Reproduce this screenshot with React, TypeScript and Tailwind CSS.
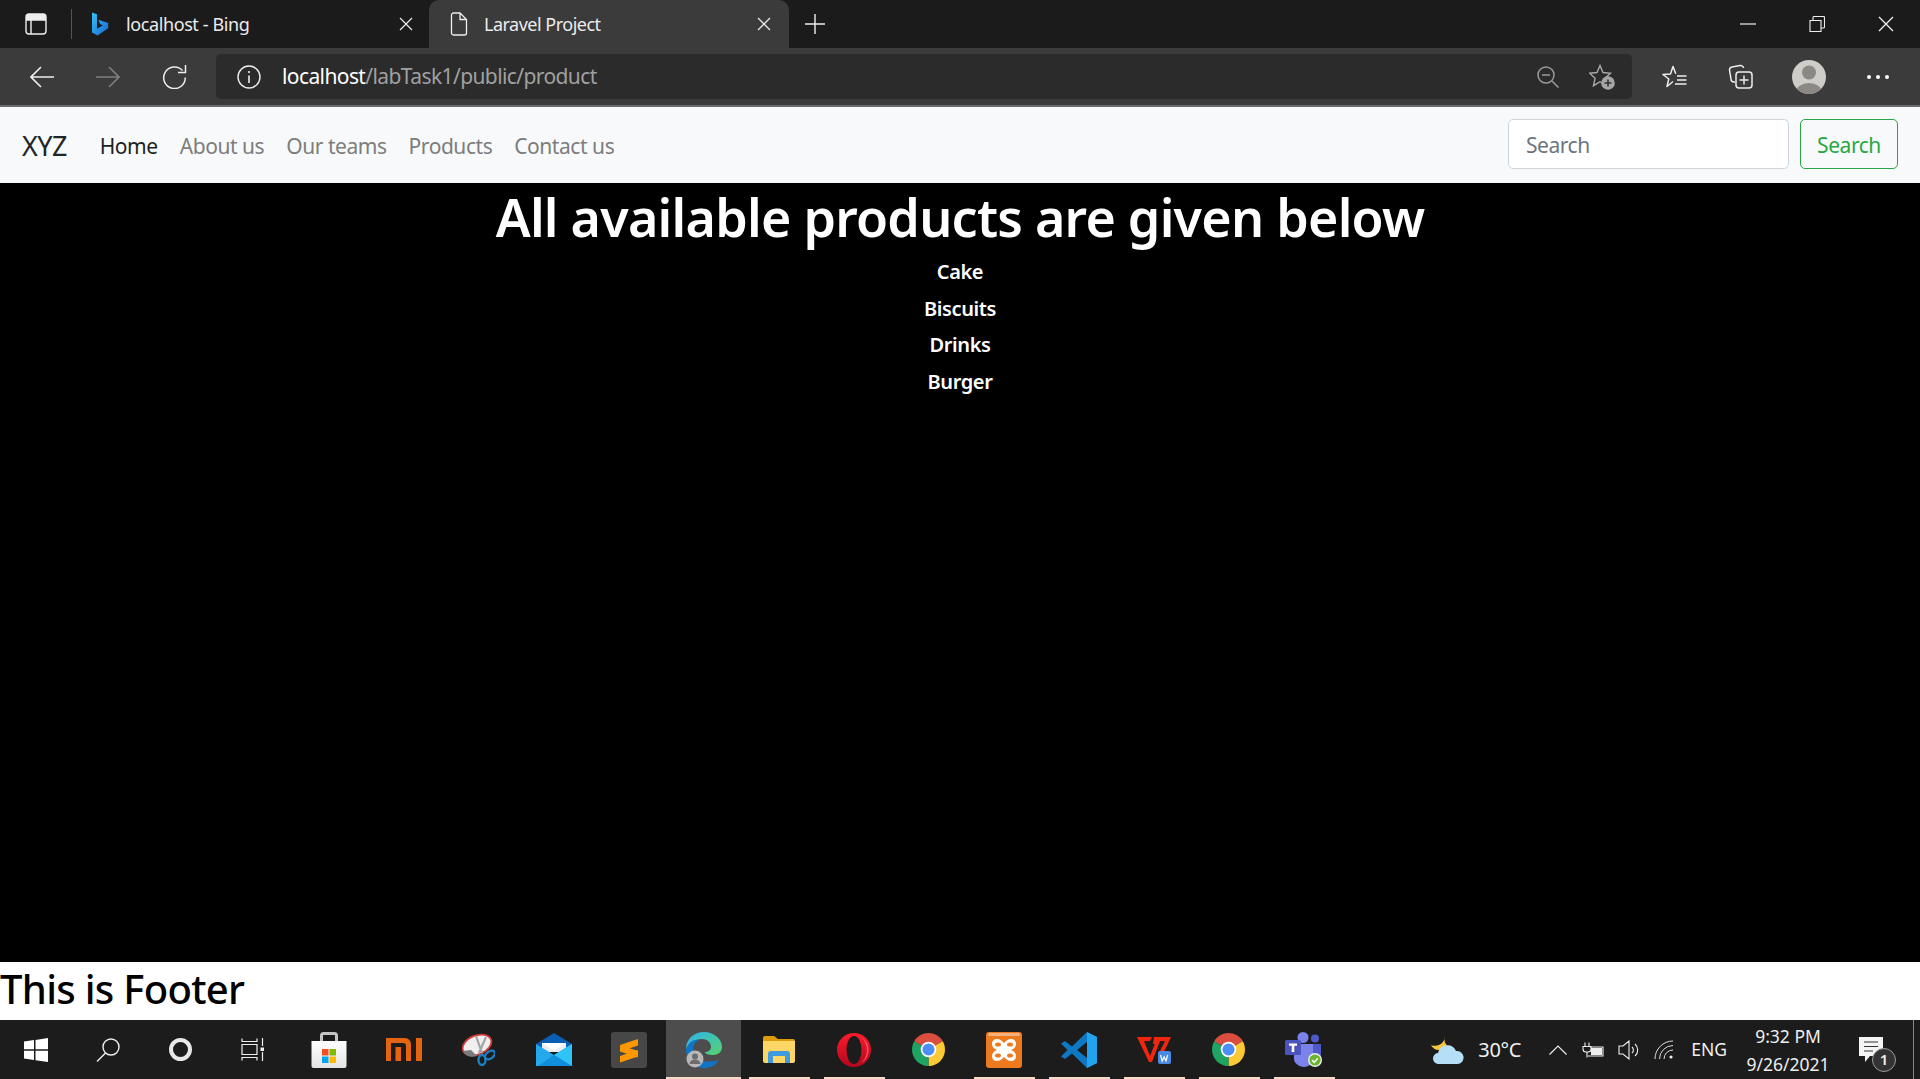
import React from "react";

const S = ({ w, h, vb, children, className = "" }: { w: number; h: number; vb?: string; children: React.ReactNode; className?: string }) => (
  <svg width={w} height={h} viewBox={vb ?? `0 0 ${w} ${h}`} fill="none" className={`block shrink-0 ${className}`}>{children}</svg>
);

const Bing = () => (
  <S w={18} h={24}>
    <defs><linearGradient id="bg" x1="0" y1="0" x2="1" y2="1"><stop offset="0" stopColor="#35c1f1" /><stop offset="1" stopColor="#1b66d6" /></linearGradient></defs>
    <path d="M1 0.500l5 1.700v14.500l6-3.400-3-1.400-1.600-4.200 9.800 3.300v5.200L6.500 23.500 1 20.500z" fill="url(#bg)" />
  </S>
);
const X = ({ s = 14, c = "#e8e8e8" }: { s?: number; c?: string }) => (
  <S w={s} h={s}><path d={`M1 1L${s - 1} ${s - 1}M${s - 1} 1L1 ${s - 1}`} stroke={c} strokeWidth="1.3" /></S>
);
const Doc = () => (
  <S w={18} h={24}><path d="M1.500 3a2 2 0 012-2h6.500l6.500 6.500V21a2 2 0 01-2 2h-11a2 2 0 01-2-2z M10 1v6.500h6.500" stroke="#eee" strokeWidth="1.3" /></S>
);
const Arrow = ({ c, flip }: { c: string; flip?: boolean }) => (
  <S w={24} h={22} className={flip ? "-scale-x-100" : ""}><path d="M1 11h23M11 1L1 11l10 10" stroke={c} strokeWidth="1.6" /></S>
);

const Win = () => (
  <S w={24} h={24}><path d="M0 3.500l10-1.400v9.200H0zM11.500 1.900L24 0v11.300H11.500zM0 12.800h10v9.200L0 20.600zM11.500 12.800H24V24l-12.500-1.800z" fill="#fff" /></S>
);

const Store = () => (
  <S w={36} h={36}>
    <defs><linearGradient id="st" x1="0" y1="0" x2="0" y2="1"><stop offset="0" stopColor="#ffffff" /><stop offset="1" stopColor="#e4e4e4" /></linearGradient></defs>
    <path d="M10.500 10V3.500A2 2 0 0112.500 1.500h11a2 2 0 012 2V10" stroke="#c4c4c4" strokeWidth="3" />
    <path d="M0.500 9h35v25a2 2 0 01-2 2h-31a2 2 0 01-2-2z" fill="url(#st)" />
    <rect x="11" y="17" width="6.500" height="6.500" fill="#f25022" /><rect x="18.500" y="17" width="6.500" height="6.500" fill="#7fba00" />
    <rect x="11" y="24.500" width="6.500" height="6.500" fill="#00a4ef" /><rect x="18.500" y="24.500" width="6.500" height="6.500" fill="#ffb900" />
  </S>
);
const Mi = () => (
  <S w={36} h={23}><path d="M0 0h19a6 6 0 016 6v17h-5V8a3 3 0 00-3-3H5v18H0zM9.500 9H15v14H9.500zM30 0h6v23h-6z" fill="#e5640f" /></S>
);
const Snip = () => (
  <S w={33} h={33}>
    <ellipse cx="15" cy="12" rx="15" ry="9.500" transform="rotate(-22 15 12)" fill="#efefef" stroke="#d33a3a" strokeWidth="1.8" />
    <path d="M1 18c2 5 8 7 14 5l-6-6z" fill="#7a7a7a" />
    <path d="M14 3l6 17M24 4L17 20" stroke="#a5a5a5" strokeWidth="2.2" />
    <ellipse cx="20" cy="27" rx="3.500" ry="5" stroke="#1c81c4" strokeWidth="2.400" />
    <ellipse cx="28" cy="22" rx="3.500" ry="5.500" transform="rotate(55 28 22)" stroke="#1c81c4" strokeWidth="2.400" />
  </S>
);
const Mail = () => (
  <S w={36} h={33}>
    <path d="M0 11L18 0l18 11v6H0z" fill="#0a5fb4" />
    <path d="M6 10h24v9H6z" fill="#ececec" />
    <path d="M6 10h24l-12 8z" fill="#ffffff" />
    <path d="M0 11l18 11 18-11v22H0z" fill="#25a9ec" />
    <path d="M36 11v22L18 22z" fill="#2fc4f7" />
    <path d="M36 33H2l16-11z" fill="#118fdd" />
  </S>
);
const Sublime = () => (
  <S w={36} h={36}>
    <rect width="36" height="36" rx="3" fill="#474747" />
    <path d="M9 13L27 7v6.500L9 19.500zM9 13l18 6v6.500L9 19.500zM9 24l18-6v6.500L9 30.500z" fill="#ff9800" />
  </S>
);
const Edge = () => (
  <S w={36} h={36}>
    <defs>
      <linearGradient id="eg" x1="0" y1="0" x2="1" y2="1"><stop offset="0" stopColor="#2db4ee" /><stop offset="1" stopColor="#58d36a" /></linearGradient>
    </defs>
    <path d="M0 17C0 7 8 0 18 0s18 7 18 15c0 5-4 8-9 8-4 0-8-1-8-3 3 0 6-2 6-5 0-5-4-8-9-8S3 10 0 17z" fill="url(#eg)" />
    <path d="M0 17c3-7 8-10 13-9-5 2-7 7-5 13 2 7 12 11 25 7-4 6-9 8-15 8C7 36 0 28 0 17z" fill="#1174c6" />
    <circle cx="9" cy="27" r="8.500" fill="#b8b8b8" />
    <circle cx="9" cy="24.500" r="3" fill="#6c6c6c" /><path d="M3.500 32a5.500 4.500 0 0111 0z" fill="#6c6c6c" />
  </S>
);
const Folder = () => (
  <S w={32} h={27}>
    <path d="M0 2a2 2 0 012-2h9l4 3h15a2 2 0 012 2v4H0z" fill="#dc9d0c" />
    <path d="M0 5h32v20a2 2 0 01-2 2H2a2 2 0 01-2-2z" fill="#fcd765" />
    <path d="M5 27v-9a3 3 0 013-3h16a3 3 0 013 3v9h-5v-7H10v7z" fill="#3f9ade" />
  </S>
);
const Opera = () => (
  <S w={34} h={34}>
    <defs><linearGradient id="op" x1="0" y1="0" x2="0" y2="1"><stop offset="0" stopColor="#ff1b2d" /><stop offset="1" stopColor="#b1071d" /></linearGradient></defs>
    <circle cx="17" cy="17" r="17" fill="url(#op)" />
    <ellipse cx="17" cy="17" rx="7.500" ry="14" fill="#1c1c1c" />
    <path d="M24 4a17 17 0 010 26 15 15 0 000-26z" fill="#ff5560" />
  </S>
);
const Chrome = () => (
  <S w={33} h={33} vb="0 0 34 34">
    <path d="M17 17L2.300 8.500A17 17 0 0131.700 8.500z" fill="#db4d3f" />
    <path d="M17 17l14.700-8.500A17 17 0 0117 34z" fill="#fcc934" />
    <path d="M17 17L17 34A17 17 0 012.300 8.500z" fill="#1ea362" />
    <circle cx="17" cy="17" r="8" fill="#fff" /><circle cx="17" cy="17" r="6.200" fill="#4c8df6" />
  </S>
);
const Xampp = () => (
  <S w={36} h={36}>
    <rect width="36" height="36" rx="3" fill="#ee7a1f" />
    <rect x="2" y="1" width="32" height="3" rx="1.500" fill="#f6b27c" />
    <path d="M11 7C8 7 6 9 6 12c0 3 2 5 5 6-3 1-5 3-5 6 0 3 2 5 5 5 3 0 5-2 7-4 2 2 4 4 7 4 3 0 5-2 5-5 0-3-2-5-5-6 3-1 5-3 5-6 0-3-2-5-5-5-3 0-5 2-7 4-2-2-4-4-7-4z" fill="#fff" />
    <ellipse cx="12" cy="12.500" rx="3" ry="2" fill="#ee7a1f" /><ellipse cx="24" cy="12.500" rx="3" ry="2" fill="#ee7a1f" />
    <ellipse cx="12" cy="23.500" rx="3" ry="2" fill="#ee7a1f" /><ellipse cx="24" cy="23.500" rx="3" ry="2" fill="#ee7a1f" />
  </S>
);
const VSCode = () => (
  <S w={36} h={36}>
    <path d="M26 0l10 5v26l-10 5-15-14.500-7 5.500-4-2.500L6.500 18 0 11.500 4 9l7 5.500z" fill="#0f78c2" />
    <path d="M26 0l10 5v26l-10 5z" fill="#22a3ee" />
    <path d="M26 10l-10 8 10 8z" fill="#1c1c1c" />
  </S>
);
const Wps = () => (
  <S w={34} h={28}>
    <path d="M0 1h15l-2 4H7l6 15 6-15h4l-8 21h-3zM17 1h17l-8 17-4-1 6-12h-7l-1 3h-4z" fill="#f0260d" />
    <rect x="21" y="15" width="13" height="13" rx="2" fill="#4a8ae4" />
    <path d="M23.500 19l1.700 6 2-4 1.800 4 1.700-6" stroke="#fff" strokeWidth="1.200" />
  </S>
);
const Teams = () => (
  <S w={37} h={35}>
    <circle cx="18" cy="5.500" r="5.500" fill="#7b83eb" /><circle cx="30" cy="6.500" r="4" fill="#5059c9" />
    <path d="M23 12h13v11c0 4-3 6-6 6h-7z" fill="#5059c9" />
    <path d="M9 12h19v15c0 4-4 8-9 8s-10-4-10-8z" fill="#7b83eb" />
    <rect x="0" y="8" width="16" height="15" rx="1.500" fill="#4b53bc" />
    <path d="M4 11.500h8v2.200H9.300V20H6.700v-6.300H4z" fill="#fff" />
    <circle cx="30" cy="28" r="7" fill="#eee" /><circle cx="30" cy="28" r="5.600" fill="#6bb52c" />
    <path d="M27 28l2.200 2.300 3.600-4" stroke="#fff" strokeWidth="1.500" />
  </S>
);

const taskItems: { icon: React.ReactNode; mark?: boolean; active?: boolean }[] = [
  { icon: <Store /> },
  { icon: <Mi /> },
  { icon: <Snip /> },
  { icon: <Mail /> },
  { icon: <Sublime /> },
  { icon: <Edge />, active: true },
  { icon: <Folder />, mark: true },
  { icon: <Opera />, mark: true },
  { icon: <Chrome /> },
  { icon: <Xampp />, mark: true },
  { icon: <VSCode />, mark: true },
  { icon: <Wps />, mark: true },
  { icon: <Chrome />, mark: true },
  { icon: <Teams />, mark: true },
];

const Slot = ({ w, children }: { w: string; children: React.ReactNode }) => (
  <div className={`flex shrink-0 items-center justify-center ${w}`}>{children}</div>
);

export default function App() {
  return (
    <div className="flex h-[1079px] w-[1920px] flex-col overflow-hidden bg-black font-['Noto_Sans',sans-serif]">
      {/* tab strip */}
      <div className="flex h-12 shrink-0 items-stretch bg-[#1b1b1b] text-[18px] text-[#ececec]">
        <div className="flex w-[71px] shrink-0 items-center justify-center">
          <S w={22} h={22}><rect x="1" y="1" width="20" height="20" rx="3" stroke="#eee" strokeWidth="1.400" /><path d="M1 7h20M6 7v14" stroke="#eee" strokeWidth="1.400" /><path d="M1 4a3 3 0 013-3h14a3 3 0 013 3v3H1z" fill="#eee" /></S>
        </div>
        <div className="my-[9px] w-px shrink-0 bg-[#555]" />
        <div className="flex w-[357px] shrink-0 items-center pl-[19px] pr-4">
          <Bing />
          <span className="ml-[17px] flex-1 tracking-[-0.4px]">localhost - Bing</span>
          <X />
        </div>
        <div className="flex w-[360px] shrink-0 items-center rounded-t-[10px] bg-[#3b3b3b] pl-[21px] pr-[18px]">
          <Doc />
          <span className="ml-[16px] flex-1 tracking-[-0.5px]">Laravel Project</span>
          <X />
        </div>
        <div className="flex w-[52px] shrink-0 items-center justify-center">
          <S w={20} h={20}><path d="M10 0v20M0 10h20" stroke="#eee" strokeWidth="1.400" /></S>
        </div>
        <div className="flex-1" />
        <Slot w="w-[69px]"><S w={16} h={2}><path d="M0 1h16" stroke="#eee" strokeWidth="1.200" /></S></Slot>
        <Slot w="w-[69px]"><S w={16} h={16}><path d="M1 4.500h11v11H1zM4 4.500V1.500a1 1 0 011-1h9.500a1 1 0 011 1V11a1 1 0 01-1 1H12" stroke="#eee" strokeWidth="1.100" /></S></Slot>
        <Slot w="w-[69px]"><X s={16} c="#f2f2f2" /></Slot>
      </div>

      {/* toolbar */}
      <div className="flex h-[59px] shrink-0 border-b-2 border-[#6a6a6a] bg-[#3b3b3b] pl-[9px] pr-[9px]">
        <Slot w="w-[66px]"><Arrow c="#eee" /></Slot>
        <Slot w="w-[66px]"><Arrow c="#7f7f7f" flip /></Slot>
        <Slot w="w-[66px]">
          <S w={25} h={25}><path d="M20.500 6.500A10.800 10.800 0 1023.300 13.500M23.500 1v7.500H16" stroke="#eee" strokeWidth="1.500" /></S>
        </Slot>
        <div className="mx-[9px] mt-[6px] flex h-[45px] flex-1 items-center rounded-[5px] bg-[#2b2b2b]">
          <div className="flex w-[66px] shrink-0 items-center justify-center">
            <S w={24} h={24}><circle cx="12" cy="12" r="11" stroke="#eee" strokeWidth="1.400" /><path d="M12 10.500V18M12 6v2" stroke="#eee" strokeWidth="1.600" /></S>
          </div>
          <div className="flex-1 text-[21px] tracking-[-0.6px] text-[#a0a0a0]"><span className="text-white">localhost</span>/labTask1/public/product</div>
          <div className="flex w-[54px] justify-center">
            <S w={22} h={22}><circle cx="9" cy="9" r="8" stroke="#9a9a9a" strokeWidth="1.500" /><path d="M5 9h8M15 15l6.500 6.500" stroke="#9a9a9a" strokeWidth="1.500" /></S>
          </div>
          <div className="flex w-[54px] justify-center">
            <S w={26} h={26}><path d="M11 1.500l3 7 7.500.7-5.500 5 1.500 7.500-6.500-4-6.500 4 1.600-7.500L.6 9.200l7.400-.7z" stroke="#a8a8a8" strokeWidth="1.400" /><circle cx="19" cy="19" r="6.800" fill="#a6a6a6" /><path d="M15.500 19h7M19 15.500v7" stroke="#333" strokeWidth="1.600" /></S>
          </div>
          <div className="w-[3px]" />
        </div>
        <Slot w="w-[66px]">
          <S w={25} h={24}><path d="M11 16.500l-6 5 1.800-7.500L1 9.500l7.500-.6L11 1.500l2.800 7.200" stroke="#eee" strokeWidth="1.500" strokeLinejoin="round" /><path d="M15 11h9.500M15 15h9.500M13 19h11.500" stroke="#eee" strokeWidth="1.500" /></S>
        </Slot>
        <Slot w="w-[66px]">
          <S w={25} h={25}><path d="M7 18H6a3 3 0 01-3-3L1.500 6a3 3 0 012.500-3l8-1.500a3 3 0 013.500 2.500" stroke="#eee" strokeWidth="1.500" /><rect x="8" y="8" width="16" height="16" rx="3" stroke="#eee" strokeWidth="1.500" /><path d="M16 11.500v9M11.500 16h9" stroke="#eee" strokeWidth="1.500" /></S>
        </Slot>
        <div className="ml-[3px]" />
        <Slot w="w-[66px]">
          <S w={34} h={34}><defs><clipPath id="av"><circle cx="17" cy="17" r="17" /></clipPath></defs><g clipPath="url(#av)"><rect width="34" height="34" fill="#cfcdc9" /><circle cx="17" cy="12.500" r="7" fill="#8c8883" /><ellipse cx="17" cy="32" rx="13" ry="9" fill="#8c8883" /></g></S>
        </Slot>
        <div className="ml-[3px]" />
        <Slot w="w-[66px]">
          <div className="flex gap-[5px]"><div className="size-[4px] rounded-full bg-white" /><div className="size-[4px] rounded-full bg-white" /><div className="size-[4px] rounded-full bg-white" /></div>
        </Slot>
      </div>

      {/* navbar */}
      <div className="flex h-[76px] shrink-0 items-center bg-[#f8f9fa] pb-[2px] pl-[22px] pr-[22px] text-[21px]">
        <span className="mt-[5px] text-[27px] tracking-[-0.6px] text-[#212529]">XYZ</span>
        <div className="ml-[33px] mt-[5px] flex gap-[22px] tracking-[-0.45px] text-[#7d7d7d]">
          <span className="text-[#1c1f22]">Home</span>
          <span>About us</span>
          <span>Our teams</span>
          <span>Products</span>
          <span>Contact us</span>
        </div>
        <div className="flex-1" />
        <div className="flex h-[50px] w-[281px] items-center rounded-[5px] border border-[#ced4da] bg-white pl-[17px] pt-[4px] tracking-[-0.45px] text-[#6c757d]">Search</div>
        <div className="ml-[11px] flex h-[50px] w-[98px] items-center justify-center rounded-[5px] border border-[#28a745] pt-[4px] tracking-[-0.45px] text-[#28a745]">Search</div>
      </div>

      {/* main */}
      <div className="flex flex-1 flex-col items-center bg-black text-white">
        <h1 className="mt-[2px] text-[52px] font-semibold leading-[64px] tracking-[-0.75px]">All available products are given below</h1>
        <div className="mt-[5px] flex flex-col items-center text-[20px] font-semibold leading-[36.7px] tracking-[-0.4px]">
          <div>Cake</div>
          <div>Biscuits</div>
          <div>Drinks</div>
          <div>Burger</div>
        </div>
      </div>

      {/* footer */}
      <div className="flex h-[58px] shrink-0 items-center bg-white pb-[4px] text-[40px] font-medium tracking-[-0.7px] text-black">This is Footer</div>

      {/* taskbar */}
      <div className="flex h-[59px] shrink-0 bg-[#1c1c1c] text-[#efefef]">
        <Slot w="w-[72px]"><Win /></Slot>
        <Slot w="w-[72px]">
          <S w={24} h={24}><circle cx="15" cy="9" r="8" stroke="#eee" strokeWidth="1.400" /><path d="M9.500 15L1 23.500" stroke="#eee" strokeWidth="1.400" /></S>
        </Slot>
        <Slot w="w-[72px]"><div className="size-[23px] rounded-full border-[4px] border-[#e8e8e8]" /></Slot>
        <Slot w="w-[72px]">
          <S w={23} h={23}><path d="M1 0.500v3h15v-3M1 22.500v-3h15v3M1 6.500h15v10H1zM21.500 0v8M21.500 14v9" stroke="#eee" strokeWidth="1.200" /><rect x="19.500" y="9.500" width="4" height="3.500" fill="#eee" /></S>
        </Slot>
        <div className="w-[3px] shrink-0" />
        {taskItems.map((t, i) => (
          <div key={i} className={`relative flex w-[75px] shrink-0 items-center justify-center ${t.active ? "bg-[#4d4d4d]" : ""}`}>
            {t.icon}
            {t.active && <div className="absolute inset-x-0 bottom-0 h-[2px] bg-[#fbd9c2]" />}
            {t.mark && <div className="absolute bottom-0 left-[8px] right-[6px] h-[2px] bg-[#fbd9c2]" />}
          </div>
        ))}
        <div className="flex-1" />
        <div className="flex items-center text-[20px] tracking-[-0.3px]">
          <S w={33} h={28} className="mr-[14px]">
            <path d="M14 0a8 8 0 005 11 9 9 0 01-10 3 9 9 0 01-9-5 10 10 0 0014-9z" fill="#f7c63f" />
            <path d="M8 28a5.500 5.500 0 01-1-11 9.500 9.500 0 0118-2 6.500 6.500 0 012 13z" fill="#b5dff6" />
          </S>
          <span>30°C</span>
          <div className="ml-[28px]"><S w={18} h={10}><path d="M0.500 9.500L9 1l8.500 8.500" stroke="#eee" strokeWidth="1.200" /></S></div>
          <div className="ml-[15px]"><S w={23} h={16}><path d="M3 0.500v4M7 0.500v4M1 4.500h8v2.500a3 3 0 01-3 3H4a3 3 0 01-3-3zM5 10v5.500" stroke="#eee" strokeWidth="1.100" /><path d="M8 5h13v9H6" stroke="#eee" strokeWidth="1.100" /><rect x="9" y="6" width="11" height="7" fill="#eee" /></S></div>
          <div className="ml-[13px]"><S w={22} h={20}><path d="M1 6h4l6-5v18l-6-5H1zM14 7a4 4 0 010 6M17 4a8 8 0 010 12" stroke="#eee" strokeWidth="1.100" /></S></div>
          <div className="ml-[14px]"><S w={20} h={20}><path d="M1 19A18 18 0 0119 1M5.500 19A13.500 13.500 0 0119 5.500M10 19a9 9 0 019-9" stroke="#ddd" strokeWidth="1" /><circle cx="17" cy="17" r="1.600" fill="#eee" /></S></div>
          <span className="ml-[17px] text-[17.5px] tracking-[0px]">ENG</span>
          <div className="ml-[19px] flex w-[84px] flex-col items-center text-[17.5px] leading-[28px] tracking-[0px]">
            <span>9:32 PM</span>
            <span>9/26/2021</span>
          </div>
          <div className="relative ml-[29px] w-[38px]">
            <S w={26} h={26}><path d="M0 0h24v19H11l-5 6v-6H0z" fill="#f4f4f4" /><path d="M5 5h14M5 9.500h14M5 14h9" stroke="#333" strokeWidth="1.200" /></S>
            <div className="absolute left-[13px] top-[11px] flex size-[24px] items-center justify-center rounded-full border border-[#999] bg-[#333] text-[15px] font-semibold">1</div>
          </div>
          <div className="ml-[16px] h-full w-px bg-[#888]" />
          <div className="w-[6px]" />
        </div>
      </div>
    </div>
  );
}
